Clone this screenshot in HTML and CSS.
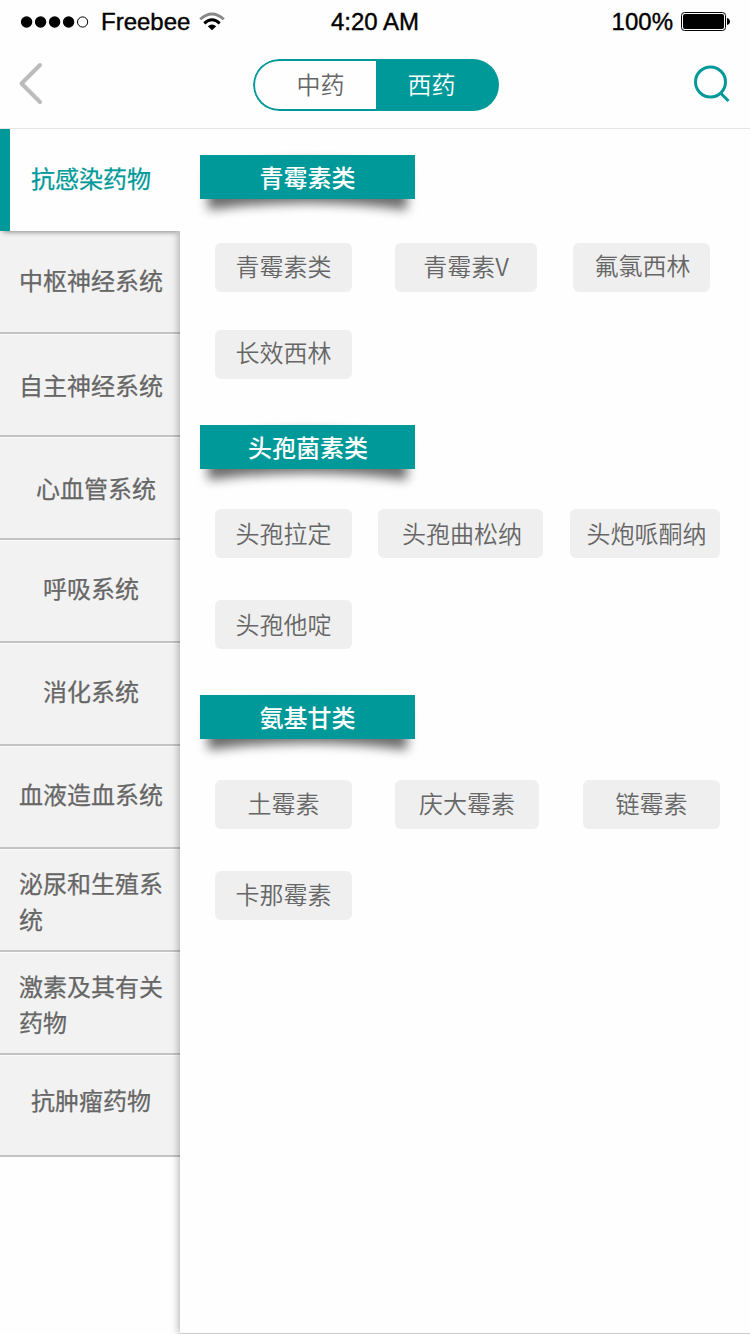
FILE: index.html
```html
<!DOCTYPE html>
<html lang="zh-CN">
<head>
<meta charset="utf-8">
<title>西药</title>
<link rel="stylesheet" href="styles.css">
</head>
<body>
<div class="app">
  <header class="header">
    <div class="status">
      <div class="status-left">
        <svg class="signal" width="70" height="14" viewBox="0 0 70 14">
          <circle cx="6.6" cy="7" r="5.7"/><circle cx="20.6" cy="7" r="5.7"/><circle cx="34.6" cy="7" r="5.7"/><circle cx="48.6" cy="7" r="5.7"/>
          <circle cx="62.6" cy="7" r="5.1" fill="none" stroke="#000" stroke-width="1"/>
        </svg>
        <span class="carrier">Freebee</span>
        <svg class="wifi" width="26" height="20" viewBox="0 0 26 20" fill="none" stroke-width="3">
          <path d="M1.200 7.200Q13 -3.200 24.800 7.200" stroke="#888" stroke-width="2.800"/>
          <path d="M5.300 11.300Q13 4.300 20.700 11.300" stroke="#000"/>
          <path d="M8.800 14.200Q13 10.600 17.200 14.200L13 18.300Z" fill="#000"/>
        </svg>
      </div>
      <div class="time">4:20 AM</div>
      <div class="status-right">
        <span class="percent">100%</span>
        <svg width="49" height="20" viewBox="0 0 49 20">
          <rect x=".5" y=".5" width="44" height="18" rx="3" fill="none" stroke="#000"/>
          <rect x="2" y="2" width="41" height="15" rx="2"/>
          <path d="M46 6Q49 7 49 9.500T46 13Z"/>
        </svg>
      </div>
    </div>
    <nav class="nav">
      <svg class="back" width="26" height="44" viewBox="0 0 26 44" fill="none" stroke="#bbb" stroke-width="4" stroke-linecap="round" stroke-linejoin="round"><path d="M22 3L3.500 21.500L22 40"/></svg>
      <div class="switch">
        <div class="switch-item">中药</div>
        <div class="switch-item switch-on">西药</div>
      </div>
      <svg class="search" width="36" height="38" viewBox="0 0 36 38" fill="none" stroke="#009999" stroke-width="3"><circle cx="16.500" cy="17" r="15"/><path d="M26.500 28L34.500 36"/></svg>
    </nav>
  </header>
  <main class="main">
    <ul class="side">
      <li class="cat cat-active"><span>抗感染药物</span></li>
      <li class="cat cat-second"><span>中枢神经系统</span></li>
      <li class="cat"><span>自主神经系统</span></li>
      <li class="cat cat-inset"><span>心血管系统</span></li>
      <li class="cat cat-raised"><span>呼吸系统</span></li>
      <li class="cat cat-raised"><span>消化系统</span></li>
      <li class="cat cat-raised"><span>血液造血系统</span></li>
      <li class="cat cat-double"><span>泌尿和生殖系统</span></li>
      <li class="cat cat-double"><span>激素及其有关药物</span></li>
      <li class="cat cat-last"><span>抗肿瘤药物</span></li>
    </ul>
    <div class="panel">
      <section class="group group-a">
        <h2 class="banner"><svg class="banner-shadow" width="255" height="94" viewBox="-20 -20 255 94"><defs><filter id="soft" x="-20%" y="-50%" width="140%" height="200%"><feGaussianBlur stdDeviation="5.500"/></filter></defs><path filter="url(#soft)" d="M8 16Q107 -3 207 16V55Q107 41 8 55Z"/></svg><span>青霉素类</span></h2>
        <div class="tags"><span class="tag">青霉素类</span><span class="tag">青霉素V</span><span class="tag nudge">氟氯西林</span></div>
        <div class="tags"><span class="tag high">长效西林</span></div>
      </section>
      <section class="group group-b">
        <h2 class="banner"><svg class="banner-shadow" width="255" height="94" viewBox="-20 -20 255 94"><path filter="url(#soft)" d="M8 16Q107 -3 207 16V55Q107 41 8 55Z"/></svg><span class="banner-wide">头孢菌素类</span></h2>
        <div class="tags"><span class="tag">头孢拉定</span><span class="tag shift">头孢曲松纳</span><span class="tag shift">头炮哌酮纳</span></div>
        <div class="tags"><span class="tag">头孢他啶</span></div>
      </section>
      <section class="group group-c">
        <h2 class="banner"><svg class="banner-shadow" width="255" height="94" viewBox="-20 -20 255 94"><path filter="url(#soft)" d="M8 16Q107 -3 207 16V55Q107 41 8 55Z"/></svg><span>氨基甘类</span></h2>
        <div class="tags"><span class="tag">土霉素</span><span class="tag">庆大霉素</span><span class="tag">链霉素</span></div>
        <div class="tags"><span class="tag">卡那霉素</span></div>
      </section>
    </div>
  </main>
</div>
</body>
</html>
```
FILE: styles.css
```css
* { box-sizing: border-box; margin: 0; padding: 0; }
body { background: #fefefe; font-family: "Noto Sans CJK SC", sans-serif; font-size: 24px; color: #666; }
svg { display: block; flex: none; }
.app { width: 750px; height: 1334px; display: flex; flex-direction: column; overflow: hidden; }

.header { height: 129px; flex: none; border-bottom: 1px solid #e5e5e5; }
.status { height: 44px; display: grid; grid-template-columns: 1fr auto 1fr; align-items: center; padding: 0 20px; color: #000; font-family: "Liberation Sans", Arial, sans-serif; font-size: 24px; -webkit-text-stroke: .4px #000; }
.status-left, .status-right { display: flex; align-items: center; }
.status-right { justify-content: flex-end; gap: 8px; }
.carrier { margin-left: 11px; }
.wifi { margin-left: 9px; }
.nav { height: 84px; display: flex; align-items: center; padding: 0 20px 4px; }
.back { margin-left: -2px; }
.switch { width: 246px; height: 52px; display: flex; margin: 2px auto 0 209px; border-radius: 26px; overflow: hidden; }
.switch-item { width: 123px; display: flex; align-items: center; justify-content: center; border: 2px solid #009999; border-right: 0; border-radius: 26px 0 0 26px; font-weight: 350; padding: 0 0 3px 10px; }
.switch-on { background: #009999; color: #fff; border: 0; border-radius: 0; padding: 0 12px 3px 0; }

.main { flex: 1; display: flex; min-height: 0; }
.side { width: 180px; list-style: none; }
.cat { height: 103px; display: flex; align-items: center; justify-content: center; background: #f2f2f2; border-bottom: 2px solid #c3c3c3; box-shadow: inset 0 1px #fafafa; padding: 0 17px 0 19px; line-height: 36px; font-weight: 400; -webkit-text-stroke: .25px; }
.cat-active { position: relative; z-index: 2; height: 102px; background: #fefefe; border: 0; border-left: 10px solid #009999; color: #009999; box-shadow: 0 4px 5px -3px rgba(0,0,0,.45); clip-path: inset(0 0 -12px 0); padding: 0 17px 4px 9px; }
.cat-second { padding-bottom: 3px; }
.cat-inset { padding-left: 29px; }
.cat-raised { padding-bottom: 5px; }
.cat-double { padding-top: 3px; }
.cat-last { height: 102px; padding-bottom: 10px; }
.panel { position: relative; z-index: 1; flex: 1; background: #fefefe; border-bottom: 1px solid #ccc; box-shadow: -1px 0 8px rgba(0,0,0,.32); clip-path: inset(0 0 0 -20px); padding: 26px 0 0 20px; }
.cat-active + .cat { box-shadow: none; }

.group { display: flex; flex-direction: column; height: 270px; }
.banner { position: relative; width: 215px; height: 44px; margin-bottom: 44px; background: #009999; color: #fff; font-size: 24px; font-weight: 500; line-height: 44px; text-align: center; }
.banner span { position: relative; display: block; height: 44px; background: #009999; }
.banner .banner-wide { padding-left: 1px; }
.banner-shadow { position: absolute; left: -20px; top: -20px; opacity: .58; }
.tags { display: flex; padding-left: 15px; margin-bottom: 38px; }
.tag { width: 137px; height: 49px; background: #efefef; border-radius: 6px; text-align: center; line-height: 46px; font-weight: 350; }
.group-b .tag { line-height: 47px; }
.tag.high { line-height: 44px; }
.tag.nudge { padding-left: 2px; line-height: 44px; }
.shift { padding-left: 3px; }
.group-a .tag:nth-child(2) { width: 142px; margin: 0 36px 0 43px; }
.group-b .banner { margin-bottom: 40px; }
.group-b .tags, .group-c .tags { margin-bottom: 42px; }
.group-b .tag:nth-child(2) { width: 165px; margin: 0 27px 0 26px; }
.group-b .tag:nth-child(3) { width: 150px; }
.group-c .banner { margin-bottom: 41px; }
.group-c .tag:nth-child(2) { width: 144px; margin: 0 44px 0 43px; }
```
